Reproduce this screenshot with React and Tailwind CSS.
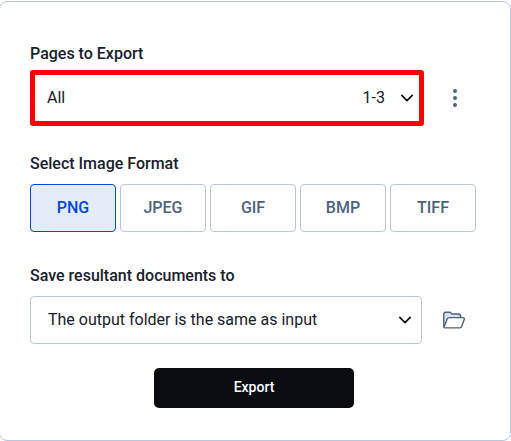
import { useState } from 'react';
import clsx from 'clsx';

const FORMATS = ['PNG', 'JPEG', 'GIF', 'BMP', 'TIFF'];

function Chevron() {
  return (
    <svg viewBox="0 0 14 8" className="h-2 w-3.5 shrink-0" fill="none" stroke="#090c11" strokeWidth="1.6" strokeLinecap="round" strokeLinejoin="round">
      <path d="M1.8 1.4 7 6.6l5.2-5.2" />
    </svg>
  );
}

function DotsIcon() {
  return (
    <svg viewBox="0 0 4 18" className="h-[18px] w-1" fill="#4b6382">
      <circle cx="2" cy="2" r="2" />
      <circle cx="2" cy="9" r="2" />
      <circle cx="2" cy="16" r="2" />
    </svg>
  );
}

function FolderIcon() {
  return (
    <svg viewBox="0 0 24 20" className="h-5 w-6" fill="none" stroke="#4b6382" strokeWidth="1.4" strokeLinecap="round" strokeLinejoin="round">
      <path
        fill="#dbe1ea"
        d="M1.8 16.6V3.9a1.6 1.6 0 0 1 1.6-1.6h4.2c.5 0 .8.2 1.1.5l1.2 1.2h6.4a2.4 2.4 0 0 1 2.4 2.4v.9"
      />
      <path
        fill="#fff"
        d="M2 17.3 5.2 8.9a2 2 0 0 1 1.9-1.3h13.8c1.1 0 1.7.8 1.4 1.7l-2.7 7.3a2 2 0 0 1-1.9 1.3H3.1c-.8 0-1.3-.5-1.3-1.2"
      />
    </svg>
  );
}

export default function App() {
  const [format, setFormat] = useState('PNG');

  return (
    <div className="h-[441px] w-[511px] overflow-hidden bg-white pt-px font-[Roboto,sans-serif] text-base text-[#18202c]">
      <div className="-ml-px flex h-[440px] w-[512px] flex-col rounded-lg border border-[#b9c6dc] pt-10 pl-[30px]">
        {/* Pages */}
        <div className="h-7 leading-6 font-medium">Pages to Export</div>
        <div className="flex items-center">
          <button className="flex h-14 w-[394px] items-center rounded-[3px] border-[5px] border-[#ff0000] pr-[5px] pl-3">
            <span className="grow text-left">All</span>
            <span className="mr-[15px]">1-3</span>
            <Chevron />
          </button>
          <button className="ml-[29px]" aria-label="More options">
            <DotsIcon />
          </button>
        </div>

        {/* Format */}
        <div className="mt-[26px] h-8 leading-6 font-medium">Select Image Format</div>
        <div className="flex gap-1">
          {FORMATS.map((f) => (
            <button
              key={f}
              onClick={() => setFormat(f)}
              className={clsx(
                'h-12 w-[86px] rounded border font-medium',
                f === format ? 'border-[#0048d9] bg-[#e4ebf9] text-[#0048d9]' : 'border-[#b9c6dc] text-[#4b6382]'
              )}
            >
              {f}
            </button>
          ))}
        </div>

        {/* Output folder */}
        <div className="mt-8 h-8 leading-6 font-medium">Save resultant documents to</div>
        <div className="flex items-center">
          <button className="flex h-12 w-[392px] items-center rounded border border-[#b9c6dc] pr-[9px] pl-[17px]">
            <span className="grow text-left">The output folder is the same as input</span>
            <Chevron />
          </button>
          <button className="ml-5" aria-label="Choose folder">
            <FolderIcon />
          </button>
        </div>

        <button className="mt-6 ml-[124px] h-10 w-[200px] rounded-[5px] bg-[#090c11] pb-0.5 text-sm font-medium text-white">
          Export
        </button>
      </div>
    </div>
  );
}
